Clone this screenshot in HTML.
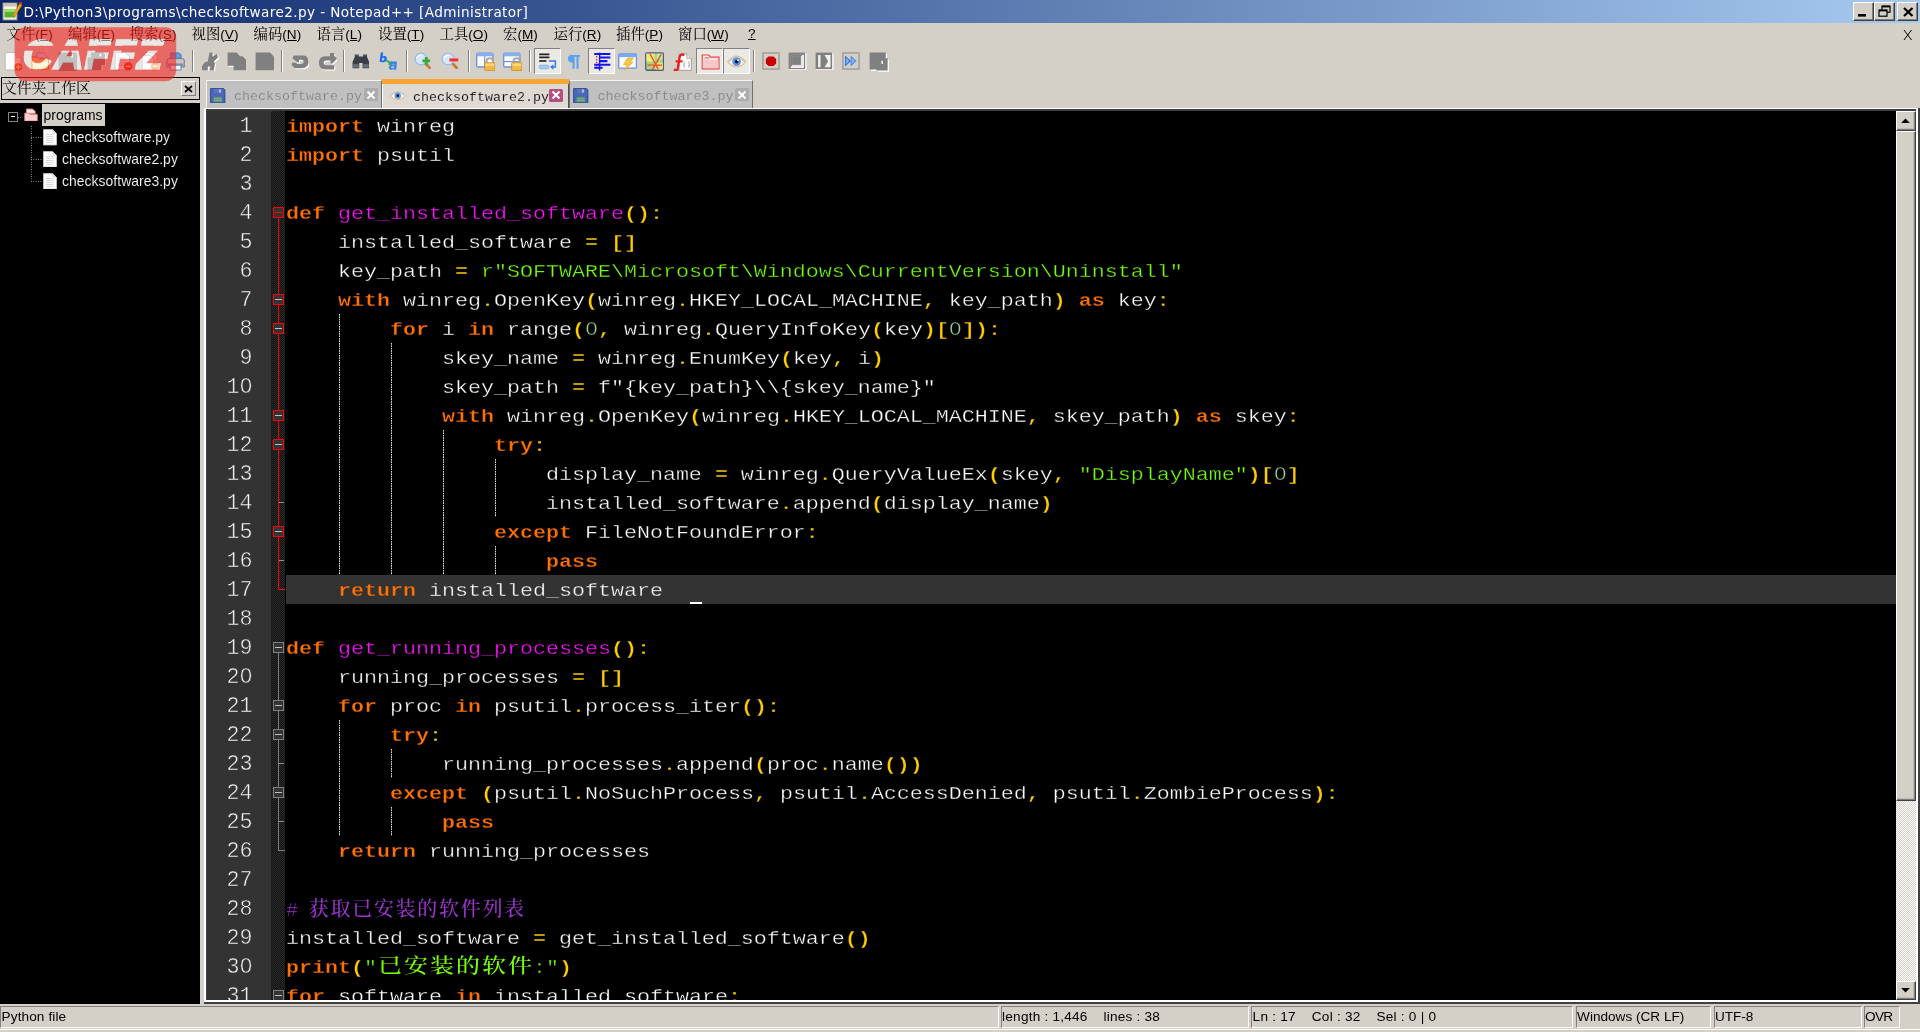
<!DOCTYPE html>
<html lang="zh"><head><meta charset="utf-8"><title>Notepad++</title>
<style>
html,body{margin:0;padding:0}
body{width:1920px;height:1032px;overflow:hidden;background:#d4d0c8;position:relative;
 font-family:"Liberation Sans","Noto Sans CJK SC",sans-serif;color:#000}
div,span,svg{position:absolute;box-sizing:border-box}
.t{white-space:pre}
#root{left:0;top:0;width:1920px;height:1032px;will-change:transform}
#title{left:0;top:0;width:1920px;height:23px;background:linear-gradient(90deg,#0a246a,#a6caf0)}
#title .t{left:23.4px;top:1.6px;color:#fff;font-family:"DejaVu Sans","Liberation Sans",sans-serif;font-size:13.6px;line-height:20px;letter-spacing:0.395px}
.wb{top:2px;width:20.5px;height:19px;background:#d4d0c8;border:1px solid;border-color:#fff #404040 #404040 #fff;box-shadow:inset -1px -1px 0 #808080}
.menu{top:24.7px;height:18px;font-size:13.6px;line-height:18px;white-space:pre;font-family:"Liberation Sans","Noto Serif CJK SC",sans-serif}
.menu b{font-weight:normal;position:relative;top:0.6px;font-size:14.4px;font-family:"Liberation Sans","Noto Serif CJK SC","Noto Sans CJK SC",serif}
.menu u{text-decoration:underline;text-underline-offset:1px}
.sep{top:50px;width:2.4px;height:22px;background:linear-gradient(90deg,#808080 0,#808080 50%,#fff 50%,#fff 100%)}
.pressed{top:48px;height:25.5px;border:1px solid;border-color:#808080 #fff #fff #808080;background:#ebe9e4}
</style></head><body><div id="root">
<div id="title"><svg style="left:2px;top:1px" width="20" height="20" viewBox="0 0 20 20"><rect x="1" y="2" width="14" height="17" fill="#f4f2ea" stroke="#8a8678" stroke-width="1"/><rect x="2" y="2.5" width="12" height="3" fill="#c8c4b4"/><rect x="2.5" y="8" width="11" height="8.5" fill="#58b030"/><rect x="2.5" y="8" width="11" height="3" fill="#a0dc60"/><path d="M18 2 L20 4 L13 15 L11 16 L11.5 13.5 Z" fill="#f0a818" stroke="#b87808" stroke-width=".6"/><rect x="17.5" y="1" width="2.5" height="2.5" fill="#c03030"/></svg><div class="t">D:\Python3\programs\checksoftware2.py - Notepad++ [Administrator]</div><div class="wb" style="left:1853px"><svg style="left:4px;top:11px" width="9" height="3"><rect width="8" height="2.6" fill="#000"/></svg></div><div class="wb" style="left:1874px"><svg style="left:3px;top:2px" width="14" height="13" viewBox="0 0 14 13"><rect x="4" y="1.2" width="8" height="6" fill="none" stroke="#000" stroke-width="1.2"/><rect x="4" y="0.6" width="8" height="1.8" fill="#000"/><rect x="1" y="5.2" width="8" height="6" fill="#d4d0c8" stroke="#000" stroke-width="1.2"/><rect x="1" y="4.6" width="8" height="1.8" fill="#000"/></svg></div><div class="wb" style="left:1897px"><svg style="left:4.5px;top:3.5px" width="11" height="10" viewBox="0 0 11 10"><path d="M1 1 L9.5 9 M9.5 1 L1 9" stroke="#000" stroke-width="2.3" fill="none"/></svg></div></div>
<div class="menu" style="left:6.5px"><b>文件</b>(<u>F</u>)</div><div class="menu" style="left:68.0px"><b>编辑</b>(<u>E</u>)</div><div class="menu" style="left:129.5px"><b>搜索</b>(<u>S</u>)</div><div class="menu" style="left:191.5px"><b>视图</b>(<u>V</u>)</div><div class="menu" style="left:253.5px"><b>编码</b>(<u>N</u>)</div><div class="menu" style="left:316.5px"><b>语言</b>(<u>L</u>)</div><div class="menu" style="left:378.0px"><b>设置</b>(<u>T</u>)</div><div class="menu" style="left:439.5px"><b>工具</b>(<u>O</u>)</div><div class="menu" style="left:503.0px"><b>宏</b>(<u>M</u>)</div><div class="menu" style="left:553.5px"><b>运行</b>(<u>R</u>)</div><div class="menu" style="left:616.0px"><b>插件</b>(<u>P</u>)</div><div class="menu" style="left:678.0px"><b>窗口</b>(<u>W</u>)</div><div class="menu" style="left:748px"><u>?</u></div><svg style="left:1902px;top:29px" width="12" height="12" viewBox="0 0 12 12"><path d="M2 1 L9.5 11 M9.5 1 L2 11" stroke="#000" stroke-width="1" fill="none"/></svg>
<svg style="left:4px;top:51.5px" width="19.2" height="19.2" viewBox="0 0 16 16"><path d="M1 0.5 H10 L14 4.5 V15 H1 Z" fill="#fdfdfd" stroke="#b8b8b8" stroke-width=".8"/><path d="M10 0.5 V4.5 H14" fill="#e4e4e4" stroke="#b0b0b0" stroke-width=".6"/><circle cx="12" cy="12.5" r="3.2" fill="#c8641c"/><path d="M12 10.6 V14.4 M10.1 12.5 H13.9" stroke="#ffe0a0" stroke-width="1.1"/></svg>
<svg style="left:31.2px;top:51.5px" width="19.2" height="19.2" viewBox="0 0 16 16"><path d="M0.8 4 H6 L7.5 5.5 H14.5 V14.5 H0.8 Z" fill="#f8d878" stroke="#e07818" stroke-width="1"/><path d="M1.5 8 H14 V14 H1.5 Z" fill="#fdf0b0"/><path d="M5 0.8 H10.5 L13 3.2 V5 H5 Z" fill="#d8d4f0" stroke="#8080c0" stroke-width=".7"/></svg>
<svg style="left:57.5px;top:51.5px" width="19.2" height="19.2" viewBox="0 0 16 16"><path d="M0.5 0.5 H14.5 L16 2 V15.8 H0.5 Z" fill="#fff" transform="translate(0.9,0.9)"/><path d="M0.5 0.5 H14.5 L16 2 V15.8 H0.5 Z" fill="#808080"/><rect x="11" y="1.8" width="1.6" height="2.6" fill="#fff"/></svg>
<svg style="left:86.5px;top:51.5px" width="19.2" height="19.2" viewBox="0 0 16 16"><path d="M3.5 0.5 H13.5 L15 2 V11 H12 V15.5 H0.5 V4.5 H3.5 Z" fill="#fff" transform="translate(0.9,0.9)"/><path d="M3.5 0.5 H13.5 L15 2 V11 H12 V15.5 H0.5 V4.5 H3.5 Z" fill="#808080"/><rect x="10.5" y="1.5" width="1.4" height="2.2" fill="#fff"/></svg>
<svg style="left:113.5px;top:51.5px" width="19.2" height="19.2" viewBox="0 0 16 16"><path d="M1 0.5 H9.5 L13 4 V15 H1 Z" fill="#fdfdfd" stroke="#a8a8a8" stroke-width=".8"/><path d="M3 5 H10 M3 7 H10 M3 9 H10 M3 11 H8" stroke="#b8b8b8" stroke-width=".8"/><circle cx="11.8" cy="12" r="3.5" fill="#e82810"/><path d="M9.8 12 H13.8" stroke="#fff" stroke-width="1.2"/></svg>
<svg style="left:141px;top:51.5px" width="19.2" height="19.2" viewBox="0 0 16 16"><path d="M3.5 0.5 H10.5 L13.5 3.5 V12 H3.5 Z" fill="#f4f4f4" stroke="#a8a8a8" stroke-width=".7"/><path d="M1 3 H8 L11 6 V15 H1 Z" fill="#fdfdfd" stroke="#a8a8a8" stroke-width=".7"/><circle cx="11.8" cy="12" r="3.5" fill="#f09038"/><path d="M9.8 12 H13.8" stroke="#fff" stroke-width="1.2"/></svg>
<svg style="left:165.5px;top:51.5px" width="19.2" height="19.2" viewBox="0 0 16 16"><path d="M4 0.8 H11 L12.5 2.3 V7 H4 Z" fill="#58a0e8" stroke="#2868b8" stroke-width=".7"/><path d="M0.8 7 Q0.8 5.5 2.3 5.5 H13.7 Q15.2 5.5 15.2 7 V12.5 H0.8 Z" fill="#c8c8cc" stroke="#707078" stroke-width=".8"/><path d="M1.5 9.5 H14.5 V12 H1.5 Z" fill="#909098"/><rect x="3.5" y="11" width="9" height="4" fill="#f4f8ff" stroke="#4080c8" stroke-width=".7"/></svg>
<div class="sep" style="left:191.5px"></div>
<svg style="left:199.5px;top:51.5px" width="19.2" height="19.2" viewBox="0 0 16 16"><path d="M8 0.5 L10.5 0.5 L10.5 4 L14 1.5 L15 4.5 L11.5 8 L12.5 9.5 L11.5 15.5 L8.5 15.5 L8.5 12 L6.5 12 L6.5 15.5 L2 15.5 L1.5 12 L4 8.5 L6.5 8 L7 5 Z" fill="#fff" transform="translate(0.9,0.9)"/><path d="M8 0.5 L10.5 0.5 L10.5 4 L14 1.5 L15 4.5 L11.5 8 L12.5 9.5 L11.5 15.5 L8.5 15.5 L8.5 12 L6.5 12 L6.5 15.5 L2 15.5 L1.5 12 L4 8.5 L6.5 8 L7 5 Z" fill="#808080"/></svg>
<svg style="left:227px;top:51.5px" width="19.2" height="19.2" viewBox="0 0 16 16"><path d="M0.5 0.5 H8 L11 3.5 H13 L16 6.5 V15.5 H5.5 V11.5 H0.5 Z" fill="#fff" transform="translate(0.9,0.9)"/><path d="M0.5 0.5 H8 L11 3.5 H13 L16 6.5 V15.5 H5.5 V11.5 H0.5 Z" fill="#808080"/></svg>
<svg style="left:254.5px;top:51.5px" width="19.2" height="19.2" viewBox="0 0 16 16"><path d="M0.5 0.5 H12.5 L16 4 V15.5 H0.5 Z" fill="#fff" transform="translate(0.9,0.9)"/><path d="M0.5 0.5 H12.5 L16 4 V15.5 H0.5 Z" fill="#808080"/></svg>
<div class="sep" style="left:281px"></div>
<svg style="left:290px;top:51.5px" width="19.2" height="19.2" viewBox="0 0 16 16"><path d="M3 3 H10.5 Q15.5 3 15.5 8 Q15.5 13.5 10 13.5 H4 L1.5 11 V9 H5.5 V10 H9.5 Q11.5 10 11.5 8.2 Q11.5 6.5 9.5 6.5 H7.5 V8.5 H6 L2 5.5 Z" fill="#fff" transform="translate(0.9,0.9)"/><path d="M3 3 H10.5 Q15.5 3 15.5 8 Q15.5 13.5 10 13.5 H4 L1.5 11 V9 H5.5 V10 H9.5 Q11.5 10 11.5 8.2 Q11.5 6.5 9.5 6.5 H7.5 V8.5 H6 L2 5.5 Z" fill="#808080"/></svg>
<svg style="left:317.5px;top:51.5px" width="19.2" height="19.2" viewBox="0 0 16 16"><path d="M13.5 0.8 L13.5 3.2 L16 5.5 L12 9.5 H10.5 V7 H7 Q4.8 7 4.8 9 Q4.8 11 7 11 H13.5 V14.5 H6 Q0.8 14.5 0.8 9 Q0.8 3.5 6 3.5 H10 V0.8 Z" fill="#fff" transform="translate(0.9,0.9)"/><path d="M13.5 0.8 L13.5 3.2 L16 5.5 L12 9.5 H10.5 V7 H7 Q4.8 7 4.8 9 Q4.8 11 7 11 H13.5 V14.5 H6 Q0.8 14.5 0.8 9 Q0.8 3.5 6 3.5 H10 V0.8 Z" fill="#808080"/></svg>
<div class="sep" style="left:343px"></div>
<svg style="left:351.5px;top:51.5px" width="17.8" height="17.8" viewBox="0 0 16 16"><path d="M2.5 2 H6 V4 H10 V2 H13.5 V4.5 L15.5 9 V14.5 H9.5 V10 H6.5 V14.5 H0.5 V9 L2.5 4.5 Z" fill="#3a3e48"/><rect x="1" y="11" width="5" height="3" fill="#687080"/><rect x="10" y="11" width="5" height="3" fill="#687080"/><path d="M3 2.5 H5.5 M10.5 2.5 H13" stroke="#a0a8b8" stroke-width="1"/></svg>
<svg style="left:378.5px;top:51.5px" width="19.2" height="19.2" viewBox="0 0 16 16"><path d="M1.5 0.5 L3.5 0.5 L3 3.5 Q6.5 2.5 6.5 5.5 Q6.3 8.8 3 8.5 L0.5 8.2 Z M2.8 5 L2.5 7 Q4.5 7.3 4.6 5.6 Q4.6 4.6 2.8 5 Z" fill="#1a6cf0"/><path d="M5.5 6.5 L10.5 10 L10.5 7.5 M10.5 10 L8 10.2" stroke="#30a860" stroke-width="1.5" fill="none"/><path d="M9.5 9.5 Q12 6.8 15 8.2 L14.3 14.8 L12.5 14.8 L12.4 14 Q9.5 15.8 8.2 13.5 Q7.8 11 11 10.6 L13 10.5 Q12.8 9.2 10.5 10.2 Z M12.8 12 Q10 11.8 10.1 13 Q10.6 14 12.6 13 Z" fill="#3a80f4"/></svg>
<div class="sep" style="left:405.5px"></div>
<svg style="left:413.5px;top:51.5px" width="17.8" height="17.8" viewBox="0 0 16 16"><path d="M9.5 9.5 L14 14.2" stroke="#c08038" stroke-width="2.6" stroke-linecap="round"/><circle cx="6.3" cy="6.3" r="5.3" fill="#d8e8fc" stroke="#98b8e8" stroke-width="1.1"/><path d="M3 5.5 Q4 2.8 7 2.8" stroke="#fff" stroke-width="1.2" fill="none"/><path d="M11 4.5 V11.5 M7.5 8 H14.5" stroke="#38a838" stroke-width="2.6"/></svg>
<svg style="left:441px;top:51.5px" width="17.8" height="17.8" viewBox="0 0 16 16"><path d="M9.5 9.5 L14 14.2" stroke="#c08038" stroke-width="2.6" stroke-linecap="round"/><circle cx="6.3" cy="6.3" r="5.3" fill="#d8e8fc" stroke="#98b8e8" stroke-width="1.1"/><path d="M3 5.5 Q4 2.8 7 2.8" stroke="#fff" stroke-width="1.2" fill="none"/><rect x="7.5" y="5.6" width="8" height="3" fill="#e83030" stroke="#f8a0a0" stroke-width=".5"/></svg>
<div class="sep" style="left:467.5px"></div>
<svg style="left:475.5px;top:51.5px" width="19.2" height="19.2" viewBox="0 0 16 16"><rect x=".6" y="1" width="13.5" height="11.5" rx="1" fill="#fff" stroke="#6890e0" stroke-width="1.1"/><rect x=".6" y="1" width="13.5" height="2.6" fill="#88b0f0"/><path d="M7.3 3.6 V12.5" stroke="#6890e0" stroke-width="1"/><path d="M8.8 9.5 V7.8 Q8.8 5.2 11.5 5.2 Q14.2 5.2 14.2 7.8 V9.5" stroke="#a8a8a8" stroke-width="1.6" fill="none"/><rect x="7.2" y="9" width="8.6" height="6.6" rx=".8" fill="#f0b848" stroke="#c88818" stroke-width=".7"/><rect x="7.8" y="9.5" width="7.4" height="2" fill="#fbd880"/></svg>
<svg style="left:503px;top:51.5px" width="19.2" height="19.2" viewBox="0 0 16 16"><rect x=".6" y="1" width="13.5" height="11.5" rx="1" fill="#fff" stroke="#6890e0" stroke-width="1.1"/><rect x=".6" y="1" width="13.5" height="2.6" fill="#88b0f0"/><path d="M.6 8 H14" stroke="#6890e0" stroke-width="1"/><path d="M8.8 9.5 V7.8 Q8.8 5.2 11.5 5.2 Q14.2 5.2 14.2 7.8 V9.5" stroke="#a8a8a8" stroke-width="1.6" fill="none"/><rect x="7.2" y="9" width="8.6" height="6.6" rx=".8" fill="#f0b848" stroke="#c88818" stroke-width=".7"/><rect x="7.8" y="9.5" width="7.4" height="2" fill="#fbd880"/></svg>
<div class="sep" style="left:529px"></div>
<div class="pressed" style="left:533.5px;width:27.5px"></div>
<svg style="left:537.5px;top:51.5px" width="19.2" height="19.2" viewBox="0 0 16 16"><path d="M1 2 H9.5 M1 4.5 H9.5" stroke="#202020" stroke-width="1.4"/><path d="M1 7.5 H7" stroke="#202020" stroke-width="1.4"/><path d="M9 7.5 H14.5 V12.5 H11.5" stroke="#3878e0" stroke-width="1.2" fill="none"/><path d="M12.8 10.2 L10 12.5 L12.8 14.8 Z" fill="#3878e0"/><rect x="1" y="11" width="8" height="3" rx="1" fill="#a8c8f4" stroke="#78a8e8" stroke-width=".6"/></svg>
<svg style="left:565px;top:51.5px" width="19.2" height="19.2" viewBox="0 0 16 16"><path d="M5 2.5 H12.5 V4 H11.3 V14 H9.6 V4 H8 V14 H6.3 V9 Q2.5 8.8 2.5 5.6 Q2.5 2.8 5 2.5 Z" fill="#58a0f0"/></svg>
<div class="pressed" style="left:587.5px;width:27.5px"></div>
<svg style="left:592.5px;top:51.5px" width="19.2" height="19.2" viewBox="0 0 16 16"><path d="M3 1 V15" stroke="#f03030" stroke-width="1.2" stroke-dasharray="1.2 1.2"/><path d="M1 1.6 H14.5 M5 4.6 H14.5 M5 7.6 H12 M1 10.6 H14.5 M1 13.2 H8" stroke="#1414f0" stroke-width="1.7"/><path d="M5.5 0.5 V15.5" stroke="#1414f0" stroke-width="1.2"/></svg>
<svg style="left:618px;top:51.5px" width="19.2" height="19.2" viewBox="0 0 16 16"><rect x=".6" y="1.5" width="14.8" height="12" rx="1" fill="#fff" stroke="#6890e0" stroke-width="1.1"/><rect x=".6" y="1.5" width="14.8" height="2.8" fill="#78a8f0"/><path d="M8 5 H13 L10 8.5 H12.5 L5.5 15.5 L7.5 10.5 H4.5 Z" fill="#f4c840" stroke="#d8a020" stroke-width=".5"/></svg>
<svg style="left:645px;top:51.5px" width="19.2" height="19.2" viewBox="0 0 16 16"><rect x=".6" y=".8" width="14.8" height="14.4" rx="1.2" fill="#a8d878" stroke="#505890" stroke-width="1.1"/><path d="M1.2 1.4 H8 V8 H1.2 Z" fill="#f4e878"/><path d="M9 9 H14.8 V14.6 H9 Z" fill="#f0e070"/><path d="M10 1.5 H14.6 V6 H10 Z" fill="#c8e8a0"/><path d="M4 1 L11 14.5 M13.5 2 L6 15 M2 11 H14" stroke="#f04830" stroke-width="1.1" fill="none"/></svg>
<svg style="left:672.5px;top:51.5px" width="19.2" height="19.2" viewBox="0 0 16 16"><path d="M5 1.5 H11.5 L15.3 5.3 V15.3 H5 Z" fill="#fbfbfb" stroke="#a0a0a0" stroke-width=".8"/><path d="M11.5 1.5 V5.3 H15.3" fill="#e0e0e0" stroke="#a0a0a0" stroke-width=".6"/><path d="M9.5 8 Q8.3 10.5 9.5 13 M13 8 Q14.2 10.5 13 13" stroke="#b8b8b8" stroke-width="1" fill="none"/><path d="M9.5 2.5 Q5.5 1 5.3 5.5 L4 14 Q3.5 16 0.8 14.5" stroke="#e82020" stroke-width="2" fill="none"/><path d="M2.2 7.8 H8" stroke="#e82020" stroke-width="1.8"/></svg>
<div class="pressed" style="left:696px;width:27px"></div>
<svg style="left:700.5px;top:51.5px" width="19.2" height="19.2" viewBox="0 0 16 16"><path d="M1 2.5 H6.5 L8 4.2 H15 V14 H1 Z" fill="#fce8e8" stroke="#e04848" stroke-width="1"/><path d="M1.5 6.5 H14.5 V13.5 H1.5 Z" fill="#f8c8c8"/><path d="M3 5 H7" stroke="#e04848" stroke-width=".8"/></svg>
<div class="pressed" style="left:723px;width:26.5px"></div>
<svg style="left:726.5px;top:51.5px" width="19.2" height="19.2" viewBox="0 0 16 16"><path d="M0.6 8 Q8 -1 15.4 8 Q8 17 0.6 8 Z" fill="#f8f4f0" stroke="#e8b888" stroke-width="1"/><path d="M1.5 8 Q8 1.5 14.5 8" stroke="#88c8e8" stroke-width=".8" fill="none"/><circle cx="8" cy="8" r="3.6" fill="#5898e0"/><circle cx="8" cy="8" r="1.6" fill="#101838"/><circle cx="9.2" cy="6.8" r=".8" fill="#fff"/></svg>
<div class="sep" style="left:753px"></div>
<svg style="left:761.5px;top:51.5px" width="18" height="18" viewBox="0 0 15 15"><rect x=".8" y=".8" width="13.4" height="13.4" fill="#d4d0c8" stroke="#a09c94" stroke-width="1.2"/><path d="M5.3 3.8 H9.7 L11.8 5.9 V9.6 L9.7 11.7 H5.3 L3.2 9.6 V5.9 Z" fill="#cc0000"/></svg>
<svg style="left:788px;top:51.5px" width="18.5" height="18.5" viewBox="0 0 15.5 15.5"><rect x=".5" y=".5" width="14" height="14" fill="#808080"/><rect x="2.4" y="2.4" width="11" height="11" fill="#f4f2ee"/><rect x="2.4" y="2.4" width="9.4" height="9.4" fill="#808080"/><rect x="3.4" y="3.4" width="8.4" height="8.4" fill="#e8e6e0"/><rect x="3.4" y="3.4" width="7.4" height="7.4" fill="#808080"/><path d="M.5 15 H15 V1" stroke="#fff" stroke-width="1" fill="none"/></svg>
<svg style="left:815px;top:51.5px" width="18.5" height="18.5" viewBox="0 0 15.5 15.5"><rect x=".5" y=".5" width="14" height="14" fill="#808080"/><rect x="2.6" y="2.6" width="2" height="10.2" fill="#f4f2ee"/><path d="M8 2.6 H13 V12.8 H8 L11 7.7 Z" fill="#f4f2ee"/><path d="M.5 15 H15 V1" stroke="#fff" stroke-width="1" fill="none"/></svg>
<svg style="left:842px;top:51.5px" width="18" height="18" viewBox="0 0 15 15"><rect x=".8" y=".8" width="13.4" height="13.4" fill="#d4d0c8" stroke="#a09c94" stroke-width="1.2"/><path d="M2.6 3 L7.4 7.5 L2.6 12 Z" fill="#2868e0"/><path d="M7.2 3 L12.2 7.5 L7.2 12 Z" fill="#4888f0"/><path d="M3.5 4.5 L6 7.5 L3.5 10.5 Z" fill="#88b8f8"/><path d="M8.2 4.8 L10.8 7.5 L8.2 10.2 Z" fill="#88b8f8"/></svg>
<svg style="left:869px;top:51.5px" width="20.5" height="20.5" viewBox="0 0 16.5 16.5"><path d="M.5 .5 H13.5 V5 H15 V14.8 H6 V14 H.5 Z" fill="#fff" transform="translate(1,1)"/><path d="M.5 .5 H13.5 V5 H15 V14.8 H6 V14 H.5 Z" fill="#808080"/><rect x="10" y="7" width="1.2" height="2.6" fill="#fff"/></svg>
<style>
#lp_head{left:0.5px;top:77px;width:199.5px;height:23px;border:1px solid #000}
#lp_head .t{left:0.5px;top:0.5px;font-family:"Liberation Sans","Noto Serif CJK SC","Noto Sans CJK SC",serif;font-size:14.8px;line-height:18px}
#lp_x{left:180.5px;top:81px;width:15.5px;height:15px;border:1px solid;border-color:#fff #808080 #808080 #fff;background:#d4d0c8}
#tree{left:0;top:103px;width:200px;height:901px;background:#000}
.tl{font-size:13.9px;line-height:20px;color:#fff;white-space:pre;letter-spacing:0.05px;-webkit-text-stroke:0.12px #000}
.dot{background-image:linear-gradient(90deg,#a0a0a0 50%,transparent 50%);background-size:2.4px 1px;height:1px}
.vdot{background-image:linear-gradient(180deg,#a0a0a0 50%,transparent 50%);background-size:1px 2.4px;width:1px}
.tab{top:79.6px;height:28.4px;background:#c0c0c0;border-left:1.5px solid #f4f4f4;border-top:1.5px solid #f4f4f4;border-right:1.2px solid #707070}
.tabt{font-family:"Liberation Mono","DejaVu Sans Mono",monospace;font-size:13.33px;line-height:16px;white-space:pre;top:8.5px;color:#808080;-webkit-text-stroke:0.2px #c0c0c0}
.tx{width:14px;height:13px;top:7.5px;background:#a8a8a8;border-radius:1.5px}
#ed{left:207px;top:110px;width:1689px;height:890px;background:#000;overflow:hidden}
#lnm{left:0;top:0;width:64px;height:890px;background:#333}
#fm{left:64px;top:0;width:14.3px;height:890px;background:repeating-conic-gradient(#2a2a2a 0% 25%,#121212 0% 50%) 0 0/2px 2px}
.ln,.cl{font-family:"Liberation Mono","Noto Serif CJK SC",monospace;font-size:21.67px;line-height:29px;height:29px;white-space:pre;color:#fff;-webkit-text-stroke:0.38px #000}
.cl,.ln{transform:scaleY(0.885);transform-origin:0 20.3px}
.cl.nt{transform:none}
.ln{transform:scaleY(0.99)}
.ln{left:0;width:45.5px;text-align:right;color:#f4f4f4;-webkit-text-stroke:0.5px #333}
.cl{left:79px}
.cl span,.ln span{position:static}
.z{font-family:"Liberation Sans",sans-serif;display:inline-block;width:13px;text-align:center;line-height:10px;vertical-align:baseline}
.k{color:#ff7000;font-weight:bold}
.o{color:#ffcc00;font-weight:bold}
.f{color:#ff10ff}
.s{color:#74ff08}
.n{color:#99cc99}
.c{color:#9933cc;font-family:"Liberation Mono","Noto Serif CJK SC",monospace}
.ig{width:1.2px;background-image:linear-gradient(180deg,#e0e0e0 52%,transparent 52%);background-size:1.2px 2.4px}
.fb{width:11.3px;height:11.3px;left:66px;border:1.2px solid #808080;background:#333}
.fb i{position:absolute;left:1.3px;top:4px;width:6.3px;height:1px;background:#b0b0b0}
.sb{left:1896px;width:20px;background:#d4d0c8;border:1.2px solid;border-color:#fff #404040 #404040 #fff;box-shadow:inset -1.2px -1.2px 0 #808080,inset 1px 1px 0 #d4d0c8}
.st{top:1006px;height:22px;border:1px solid;border-color:#808080 #fff #fff #808080}
.st .t{left:0.6px;top:0.5px;font-size:13.6px;line-height:18px}
</style>

<div id="lp_head"><div class="t">文件夹工作区</div></div>
<div id="lp_x"><svg style="left:2.5px;top:2.5px" width="9" height="8" viewBox="0 0 9 8"><path d="M1 1 L8 7 M8 1 L1 7" stroke="#000" stroke-width="1.7"/></svg></div>
<div id="tree">
<div style="left:8px;top:9.2px;width:9.6px;height:9.6px;border:1.1px solid #858585;background:#000"><div style="left:1.5px;top:3px;width:4.6px;height:1.3px;background:#fff"></div></div>
<div class="dot" style="left:18px;top:13.7px;width:5px"></div>
<svg style="left:23.5px;top:4.5px" width="14" height="13.6" viewBox="0 0 15 14.5"><path d="M2.5 1 H9 L12 3.5 V6 H2.5 Z" fill="#fbe4e4" stroke="#e07070" stroke-width=".9"/><path d="M.8 5.5 H5.5 L6.5 6.8 H14.2 V13.8 H.8 Z" fill="#fad0d0" stroke="#e89090" stroke-width=".9"/></svg>
<div style="left:42px;top:1.2px;width:63px;height:21.6px;background:#d4d0c8"></div>
<div class="tl" style="left:43.5px;top:2px;color:#000;-webkit-text-stroke:0">programs</div>
<div class="vdot" style="left:31px;top:23px;width:1px;height:56px"></div>
<div class="dot" style="left:31px;top:34.3px;width:11px"></div>
<svg style="left:43px;top:26.0px" width="14" height="16.5" viewBox="0 0 14 16.5"><path d="M.5 .5 H9.5 L13.5 4.5 V16 H.5 Z" fill="#fcfcfc" stroke="#c8c8c8" stroke-width=".8"/><path d="M9.5 .5 V4.5 H13.5" fill="#dcdcdc"/><path d="M3 5.5 H10.5 M3 7.5 H10.5 M3 9.5 H10.5 M3 11.5 H10.5 M3 13.5 H10.5" stroke="#d0d0d0" stroke-width=".8"/></svg>
<div class="tl" style="left:62px;top:23.8px">checksoftware.py</div>
<div class="dot" style="left:31px;top:56.2px;width:11px"></div>
<svg style="left:43px;top:47.9px" width="14" height="16.5" viewBox="0 0 14 16.5"><path d="M.5 .5 H9.5 L13.5 4.5 V16 H.5 Z" fill="#fcfcfc" stroke="#c8c8c8" stroke-width=".8"/><path d="M9.5 .5 V4.5 H13.5" fill="#dcdcdc"/><path d="M3 5.5 H10.5 M3 7.5 H10.5 M3 9.5 H10.5 M3 11.5 H10.5 M3 13.5 H10.5" stroke="#d0d0d0" stroke-width=".8"/></svg>
<div class="tl" style="left:62px;top:45.7px">checksoftware2.py</div>
<div class="dot" style="left:31px;top:78.1px;width:11px"></div>
<svg style="left:43px;top:69.8px" width="14" height="16.5" viewBox="0 0 14 16.5"><path d="M.5 .5 H9.5 L13.5 4.5 V16 H.5 Z" fill="#fcfcfc" stroke="#c8c8c8" stroke-width=".8"/><path d="M9.5 .5 V4.5 H13.5" fill="#dcdcdc"/><path d="M3 5.5 H10.5 M3 7.5 H10.5 M3 9.5 H10.5 M3 11.5 H10.5 M3 13.5 H10.5" stroke="#d0d0d0" stroke-width=".8"/></svg>
<div class="tl" style="left:62px;top:67.6px">checksoftware3.py</div>
</div>

<div class="tab" style="left:206px;width:175.5px"><svg style="left:3px;top:7px" width="15.5" height="15.5" viewBox="0 0 16 16"><path d="M.6 .6 H14 L15.4 2 V15.4 H.6 Z" fill="#4a66b4" stroke="#2e4a98" stroke-width="1"/><rect x="4" y="1" width="8" height="4.5" fill="#5a74ba"/><rect x="9.5" y="1.6" width="1.6" height="3" fill="#d0d8f0"/><rect x="3.5" y="9" width="9" height="5.6" fill="#5c8c78"/><path d="M4 11 H12 M4 13 H12" stroke="#88c0a0" stroke-width=".8"/></svg><div class="tabt" style="left:27px">checksoftware.py</div><div class="tx" style="left:156.5px;top:7.5px;background:#acacac"><svg style="left:2px;top:1.5px" width="10" height="10" viewBox="0 0 10 10"><path d="M1.5 1.5 L8.5 8.5 M8.5 1.5 L1.5 8.5" stroke="#fff" stroke-width="2"/></svg></div></div>
<div class="tab" style="left:568.5px;width:184.5px;border-left:1.2px solid #707070"><svg style="left:3.5px;top:7px" width="15.5" height="15.5" viewBox="0 0 16 16"><path d="M.6 .6 H14 L15.4 2 V15.4 H.6 Z" fill="#4a66b4" stroke="#2e4a98" stroke-width="1"/><rect x="4" y="1" width="8" height="4.5" fill="#5a74ba"/><rect x="9.5" y="1.6" width="1.6" height="3" fill="#d0d8f0"/><rect x="3.5" y="9" width="9" height="5.6" fill="#5c8c78"/><path d="M4 11 H12 M4 13 H12" stroke="#88c0a0" stroke-width=".8"/></svg><div class="tabt" style="left:28px">checksoftware3.py</div><div class="tx" style="left:165.5px;top:7.5px;background:#acacac"><svg style="left:2px;top:1.5px" width="10" height="10" viewBox="0 0 10 10"><path d="M1.5 1.5 L8.5 8.5 M8.5 1.5 L1.5 8.5" stroke="#fff" stroke-width="2"/></svg></div></div>
<div style="left:381.5px;top:79px;width:187px;height:29.5px;background:#dedad3;border-left:1.2px solid #fff;border-right:1.5px solid #505050"><div style="left:-1px;top:0;width:187px;height:5px;background:#faa633"></div><svg style="left:6px;top:10.5px" width="17.5" height="12" viewBox="0 0 20 14"><path d="M.8 7 Q10 -3 19.2 7 Q10 15.5 .8 7 Z" fill="#fbf6ee" stroke="#e8b070" stroke-width="1"/><path d="M2 6.2 Q10 -.5 18 6.2" stroke="#90c8e8" stroke-width="1" fill="none"/><circle cx="10" cy="6.6" r="3.7" fill="#6098d8"/><circle cx="10" cy="6.6" r="1.6" fill="#182040"/></svg><div class="tabt" style="left:30.5px;top:10.5px;color:#000">checksoftware2.py</div><div class="tx" style="left:166px;top:9.5px;background:#b44f80"><svg style="left:2px;top:1.5px" width="10" height="10" viewBox="0 0 10 10"><path d="M1.5 1.5 L8.5 8.5 M8.5 1.5 L1.5 8.5" stroke="#fff" stroke-width="2"/></svg></div></div>
<style>
.cj{display:inline-block;position:static;width:156px;height:20px;font-size:20px;letter-spacing:1.67px;line-height:20px;-webkit-text-stroke:0;font-weight:500;margin-left:1.5px;margin-right:-1.5px;transform:scale(1.2,1.13);transform-origin:0 70%;vertical-align:baseline}
.c{font-size:20px;letter-spacing:1.7px;position:relative !important;top:1px;-webkit-text-stroke:0;font-weight:500}
.c .h{letter-spacing:-0.6px;font-size:20px;-webkit-text-stroke:0.4px #000}
</style>
<div style="left:204px;top:107.5px;width:1716px;height:896.4px;background:#404040"></div>
<div style="left:204px;top:107.5px;width:1714.2px;height:894.8px;background:#fff"></div>
<div style="left:206.4px;top:109px;width:1709.6px;height:891px;background:#404040"></div>
<div id="ed">
<div id="lnm"></div><div id="fm"></div><div style="left:0;top:0;width:1689px;height:1px;background:#3c3c3c"></div>
<div style="left:79px;top:465.0px;width:1610px;height:29px;background:#333"></div>
<div class="ig" style="left:132.0px;top:203.5px;height:29px"></div>
<div class="ig" style="left:132.0px;top:232.5px;height:29px"></div>
<div class="ig" style="left:184.0px;top:232.5px;height:29px"></div>
<div class="ig" style="left:132.0px;top:261.5px;height:29px"></div>
<div class="ig" style="left:184.0px;top:261.5px;height:29px"></div>
<div class="ig" style="left:132.0px;top:290.5px;height:29px"></div>
<div class="ig" style="left:184.0px;top:290.5px;height:29px"></div>
<div class="ig" style="left:132.0px;top:319.5px;height:29px"></div>
<div class="ig" style="left:184.0px;top:319.5px;height:29px"></div>
<div class="ig" style="left:236.0px;top:319.5px;height:29px"></div>
<div class="ig" style="left:132.0px;top:348.5px;height:29px"></div>
<div class="ig" style="left:184.0px;top:348.5px;height:29px"></div>
<div class="ig" style="left:236.0px;top:348.5px;height:29px"></div>
<div class="ig" style="left:288.0px;top:348.5px;height:29px"></div>
<div class="ig" style="left:132.0px;top:377.5px;height:29px"></div>
<div class="ig" style="left:184.0px;top:377.5px;height:29px"></div>
<div class="ig" style="left:236.0px;top:377.5px;height:29px"></div>
<div class="ig" style="left:288.0px;top:377.5px;height:29px"></div>
<div class="ig" style="left:132.0px;top:406.5px;height:29px"></div>
<div class="ig" style="left:184.0px;top:406.5px;height:29px"></div>
<div class="ig" style="left:236.0px;top:406.5px;height:29px"></div>
<div class="ig" style="left:132.0px;top:435.5px;height:29px"></div>
<div class="ig" style="left:184.0px;top:435.5px;height:29px"></div>
<div class="ig" style="left:236.0px;top:435.5px;height:29px"></div>
<div class="ig" style="left:288.0px;top:435.5px;height:29px"></div>
<div class="ig" style="left:132.0px;top:609.5px;height:29px"></div>
<div class="ig" style="left:132.0px;top:638.5px;height:29px"></div>
<div class="ig" style="left:184.0px;top:638.5px;height:29px"></div>
<div class="ig" style="left:132.0px;top:667.5px;height:29px"></div>
<div class="ig" style="left:132.0px;top:696.5px;height:29px"></div>
<div class="ig" style="left:184.0px;top:696.5px;height:29px"></div>
<div class="ln" style="top:2.0px">1</div>
<div class="cl" style="top:2.0px"><span class="k">import</span> winreg</div>
<div class="ln" style="top:31.0px">2</div>
<div class="cl" style="top:31.0px"><span class="k">import</span> psutil</div>
<div class="ln" style="top:60.0px">3</div>
<div class="ln" style="top:89.0px">4</div>
<div class="cl" style="top:89.0px"><span class="k">def</span> <span class="f">get_installed_software</span><span class="o">(</span><span class="o">)</span><span class="o">:</span></div>
<div class="ln" style="top:118.0px">5</div>
<div class="cl" style="top:118.0px">    installed_software <span class="o">=</span> <span class="o">[</span><span class="o">]</span></div>
<div class="ln" style="top:147.0px">6</div>
<div class="cl" style="top:147.0px">    key_path <span class="o">=</span> <span class="s">r&quot;SOFTWARE\Microsoft\Windows\CurrentVersion\Uninstall&quot;</span></div>
<div class="ln" style="top:176.0px">7</div>
<div class="cl" style="top:176.0px">    <span class="k">with</span> winreg<span class="o">.</span>OpenKey<span class="o">(</span>winreg<span class="o">.</span>HKEY_LOCAL_MACHINE<span class="o">,</span> key_path<span class="o">)</span> <span class="k">as</span> key<span class="o">:</span></div>
<div class="ln" style="top:205.0px">8</div>
<div class="cl" style="top:205.0px">        <span class="k">for</span> i <span class="k">in</span> range<span class="o">(</span><span class="n"><span class="z">0</span></span><span class="o">,</span> winreg<span class="o">.</span>QueryInfoKey<span class="o">(</span>key<span class="o">)</span><span class="o">[</span><span class="n"><span class="z">0</span></span><span class="o">]</span><span class="o">)</span><span class="o">:</span></div>
<div class="ln" style="top:234.0px">9</div>
<div class="cl" style="top:234.0px">            skey_name <span class="o">=</span> winreg<span class="o">.</span>EnumKey<span class="o">(</span>key<span class="o">,</span> i<span class="o">)</span></div>
<div class="ln" style="top:263.0px">1<span class="z">0</span></div>
<div class="cl" style="top:263.0px">            skey_path <span class="o">=</span> f&quot;{key_path}\\{skey_name}&quot;</div>
<div class="ln" style="top:292.0px">11</div>
<div class="cl" style="top:292.0px">            <span class="k">with</span> winreg<span class="o">.</span>OpenKey<span class="o">(</span>winreg<span class="o">.</span>HKEY_LOCAL_MACHINE<span class="o">,</span> skey_path<span class="o">)</span> <span class="k">as</span> skey<span class="o">:</span></div>
<div class="ln" style="top:321.0px">12</div>
<div class="cl" style="top:321.0px">                <span class="k">try</span><span class="o">:</span></div>
<div class="ln" style="top:350.0px">13</div>
<div class="cl" style="top:350.0px">                    display_name <span class="o">=</span> winreg<span class="o">.</span>QueryValueEx<span class="o">(</span>skey<span class="o">,</span> <span class="s">&quot;DisplayName&quot;</span><span class="o">)</span><span class="o">[</span><span class="n"><span class="z">0</span></span><span class="o">]</span></div>
<div class="ln" style="top:379.0px">14</div>
<div class="cl" style="top:379.0px">                    installed_software<span class="o">.</span>append<span class="o">(</span>display_name<span class="o">)</span></div>
<div class="ln" style="top:408.0px">15</div>
<div class="cl" style="top:408.0px">                <span class="k">except</span> FileNotFoundError<span class="o">:</span></div>
<div class="ln" style="top:437.0px">16</div>
<div class="cl" style="top:437.0px">                    <span class="k">pass</span></div>
<div class="ln" style="top:466.0px">17</div>
<div class="cl" style="top:466.0px;-webkit-text-stroke-color:#333">    <span class="k">return</span> installed_software </div>
<div class="ln" style="top:495.0px">18</div>
<div class="ln" style="top:524.0px">19</div>
<div class="cl" style="top:524.0px"><span class="k">def</span> <span class="f">get_running_processes</span><span class="o">(</span><span class="o">)</span><span class="o">:</span></div>
<div class="ln" style="top:553.0px">2<span class="z">0</span></div>
<div class="cl" style="top:553.0px">    running_processes <span class="o">=</span> <span class="o">[</span><span class="o">]</span></div>
<div class="ln" style="top:582.0px">21</div>
<div class="cl" style="top:582.0px">    <span class="k">for</span> proc <span class="k">in</span> psutil<span class="o">.</span>process_iter<span class="o">(</span><span class="o">)</span><span class="o">:</span></div>
<div class="ln" style="top:611.0px">22</div>
<div class="cl" style="top:611.0px">        <span class="k">try</span><span class="o">:</span></div>
<div class="ln" style="top:640.0px">23</div>
<div class="cl" style="top:640.0px">            running_processes<span class="o">.</span>append<span class="o">(</span>proc<span class="o">.</span>name<span class="o">(</span><span class="o">)</span><span class="o">)</span></div>
<div class="ln" style="top:669.0px">24</div>
<div class="cl" style="top:669.0px">        <span class="k">except</span> <span class="o">(</span>psutil<span class="o">.</span>NoSuchProcess<span class="o">,</span> psutil<span class="o">.</span>AccessDenied<span class="o">,</span> psutil<span class="o">.</span>ZombieProcess<span class="o">)</span><span class="o">:</span></div>
<div class="ln" style="top:698.0px">25</div>
<div class="cl" style="top:698.0px">            <span class="k">pass</span></div>
<div class="ln" style="top:727.0px">26</div>
<div class="cl" style="top:727.0px">    <span class="k">return</span> running_processes</div>
<div class="ln" style="top:756.0px">27</div>
<div class="ln" style="top:785.0px">28</div>
<div class="cl nt" style="top:785.0px"><span class="c"><span class="h"># </span>获取已安装的软件列表</span></div>
<div class="ln" style="top:814.0px">29</div>
<div class="cl" style="top:814.0px">installed_software <span class="o">=</span> get_installed_software<span class="o">(</span><span class="o">)</span></div>
<div class="ln" style="top:843.0px">3<span class="z">0</span></div>
<div class="cl" style="top:843.0px"><span class="k">print</span><span class="o">(</span><span class="s">&quot;<span class="cj">已安装的软件</span>:&quot;</span><span class="o">)</span></div>
<div class="ln" style="top:872.0px">31</div>
<div class="cl" style="top:872.0px"><span class="k">for</span> software <span class="k">in</span> installed_software<span class="o">:</span></div>
<div style="left:483px;top:491.7px;width:12px;height:2.3px;background:#fff"></div>
<div style="left:71px;top:108.0px;width:1.3px;height:371.0px;background:#ff0000"></div>
<div class="fb" style="top:183.5px;border-color:#ff0000"><i style="background:#c0c0c0"></i></div>
<div class="fb" style="top:212.5px;border-color:#ff0000"><i style="background:#c0c0c0"></i></div>
<div class="fb" style="top:299.5px;border-color:#ff0000"><i style="background:#c0c0c0"></i></div>
<div class="fb" style="top:328.5px;border-color:#ff0000"><i style="background:#c0c0c0"></i></div>
<div class="fb" style="top:415.5px;border-color:#ff0000"><i style="background:#c0c0c0"></i></div>
<div class="fb" style="top:96.5px;border-color:#ff0000"><i style="background:#ff0000"></i></div>
<div style="left:72.3px;top:391.5px;width:5.2px;height:1.2px;background:#909090"></div>
<div style="left:72.3px;top:449.5px;width:5.2px;height:1.2px;background:#909090"></div>
<div style="left:71px;top:478.5px;width:6.5px;height:1.3px;background:#ff0000"></div>
<div style="left:71px;top:543.0px;width:1.3px;height:197.0px;background:#808080"></div>
<div class="fb" style="top:531.5px;border-color:#808080"><i style="background:#c0c0c0"></i></div>
<div class="fb" style="top:589.5px;border-color:#808080"><i style="background:#c0c0c0"></i></div>
<div class="fb" style="top:618.5px;border-color:#808080"><i style="background:#c0c0c0"></i></div>
<div class="fb" style="top:676.5px;border-color:#808080"><i style="background:#c0c0c0"></i></div>
<div style="left:72.3px;top:652.5px;width:5.2px;height:1.2px;background:#909090"></div>
<div style="left:72.3px;top:710.5px;width:5.2px;height:1.2px;background:#909090"></div>
<div style="left:71px;top:739.5px;width:6.5px;height:1.3px;background:#808080"></div>
<div class="fb" style="top:879.5px;border-color:#808080"><i style="background:#c0c0c0"></i></div>
</div>
<div style="left:1896px;top:110.5px;width:20px;height:889.5px;background:repeating-conic-gradient(#fff 0% 25%,#d4d0c8 0% 50%) 0 0/2px 2px"></div>
<div class="sb" style="top:111px;height:19.5px"><svg style="left:3.7px;top:5.5px" width="9" height="6" viewBox="0 0 9 6"><path d="M4.5 .5 L8.8 5 H.2 Z" fill="#000"/></svg></div>
<div class="sb" style="top:131px;height:670px"></div>
<div class="sb" style="top:980.5px;height:19.5px"><svg style="left:3.7px;top:5.6px" width="9" height="6" viewBox="0 0 9 6"><path d="M4.5 5.5 L8.8 1 H.2 Z" fill="#000"/></svg></div>
<div class="st" style="left:0px;width:998.5px"><div class="t" style="letter-spacing:0.1px">Python file</div></div>
<div class="st" style="left:1000.5px;width:248px"><div class="t" style="letter-spacing:0.22px">length : 1,446    lines : 38</div></div>
<div class="st" style="left:1251px;width:322px"><div class="t" style="letter-spacing:0.23px">Ln : 17    Col : 32    Sel : 0 | 0</div></div>
<div class="st" style="left:1575.5px;width:135.5px"><div class="t" style="letter-spacing:0px">Windows (CR LF)</div></div>
<div class="st" style="left:1713.5px;width:148px"><div class="t" style="letter-spacing:-0.1px">UTF-8</div></div>
<div class="st" style="left:1863.5px;width:36px"><div class="t" style="letter-spacing:-0.7px">OVR</div></div>
<div style="left:0;top:1029.2px;width:1920px;height:1.1px;background:#fff"></div>
<svg style="left:0;top:20px" width="200" height="70" viewBox="0 20 200 70">
<defs><mask id="wm"><rect x="0" y="20" width="200" height="70" fill="#fff"/><g clip-path="url(#wc)"><text x="22.5" y="68.6" font-family="Liberation Sans, sans-serif" font-weight="bold" font-style="italic" font-size="42" letter-spacing="0.6" stroke-width="1.6" stroke-linejoin="miter" fill="#000" stroke="#000">CAFFZ</text></g></mask>
<clipPath id="wc"><rect x="0" y="38" width="200" height="7.8"/><rect x="0" y="50.8" width="200" height="19"/></clipPath></defs>
<rect x="14.6" y="27.2" width="161.6" height="54" rx="11" ry="11" fill="rgba(245,35,33,0.6)" mask="url(#wm)"/>
<g clip-path="url(#wc)" opacity="0.5"><text x="22.5" y="68.6" font-family="Liberation Sans, sans-serif" font-weight="bold" font-style="italic" font-size="42" letter-spacing="0.6" stroke-width="1.6" stroke-linejoin="miter" fill="#fff" stroke="#fff">CAFFZ</text></g>
</svg>
</div></body></html>
